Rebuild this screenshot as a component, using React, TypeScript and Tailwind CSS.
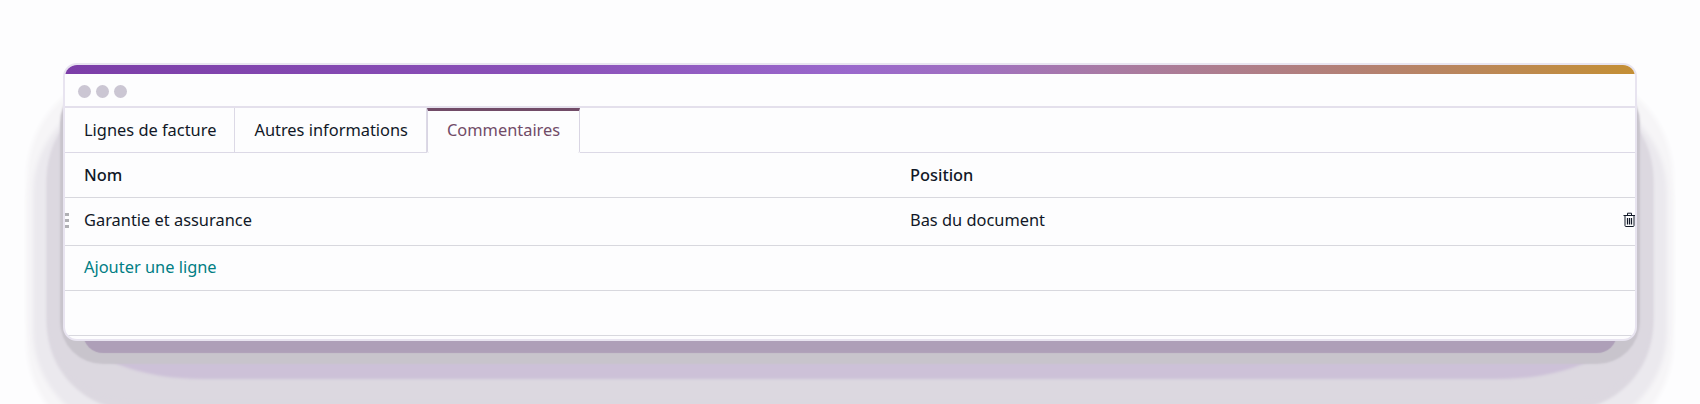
const Tab = ({ label, active = false }: { label: string; active?: boolean }) =>
  active ? (
    <div className="flex h-[45px] items-center rounded-b-[2px] border-x border-t-[3px] border-x-[#d9d5e3] border-t-[#714b67] bg-[#fdfdfe] px-[19px] pb-[3px] text-[#714b67]">
      {label}
    </div>
  ) : (
    <div className="flex h-[45px] items-center border-b border-r border-[#dcd9e6] pl-[19px] pr-[18px] text-[#111827]">
      {label}
    </div>
  );

const Row = ({ left, right, className }: { left: string; right: string; className: string }) => (
  <div className={`grid grid-cols-[826px_1fr] items-center border-b border-[#d8d8de] pl-[19px] text-[#111827] ${className}`}>
    <span>{left}</span>
    <span>{right}</span>
  </div>
);

const TrashIcon = () => (
  <svg viewBox="0 0 13 15" className="h-[15px] w-[13px] text-[#111827]" fill="none" stroke="currentColor">
    <path d="M4.5 3V1.2h4V3" />
    <path d="M0.5 3.5h12" />
    <path d="M2 3.5v10.2c0 .5.3.8.8.8h7.4c.5 0 .8-.3.8-.8V3.5" />
    <path d="M4.5 6v6.5M6.5 6v6.5M8.5 6v6.5" strokeWidth="1.2" />
  </svg>
);

export default function App() {
  return (
    <div className="h-[404px] overflow-hidden bg-[#fdfdfe] px-[63px] pt-[63px] font-['Noto_Sans',sans-serif] text-[16.4px]">
      {/* wide stepped shadow, big corner radius so the steps curve */}
      <div className="rounded-[70px] shadow-[0_44px_3px_16px_#dcd8e0,0_53px_3px_16px_#dcd8e0,0_60px_4px_30px_#ebe9ee,0_72px_4px_36px_#f6f5f7,0_44px_4px_36px_#f6f5f7]">
        <div className="rounded-[140px/70px] shadow-[0_58px_3px_-20px_#cdc1d8]">
          {/* tight shadow under the card */}
          <div className="rounded-[40px] shadow-[0_32px_1px_-20px_#ae9fb8,0_20px_2px_3px_#c8c4cc]">
            <div className="flex h-[278px] flex-col overflow-hidden rounded-[14px] border-2 border-[#e8e4f0] bg-[#fdfdfe]">
              <div className="h-[9px] shrink-0 bg-[linear-gradient(90deg,#7c3ea8_0%,#8a50b8_30%,#9a68cc_50%,#a070c0_58%,#a87aa5_66%,#b38075_82%,#c48f35_100%)]" />
              <div className="flex h-[34px] shrink-0 items-center gap-[5px] border-b-2 border-[#e4e0ec] pl-[13px] pt-[2px]">
                <span className="size-[13px] rounded-full bg-[#cbc6d3]" />
                <span className="size-[13px] rounded-full bg-[#cbc6d3]" />
                <span className="size-[13px] rounded-full bg-[#cbc6d3]" />
              </div>
              <div className="flex shrink-0">
                <Tab label="Lignes de facture" />
                <Tab label="Autres informations" />
                <Tab label="Commentaires" active />
                <div className="h-[45px] flex-1 border-b border-[#dcd9e6]" />
              </div>
              <Row left="Nom" right="Position" className="h-[45px] font-medium" />
              <div className="relative">
                <Row left="Garantie et assurance" right="Bas du document" className="h-[48px] pb-[3px]" />
                <div className="absolute left-0 top-[15px] flex flex-col gap-[3px]">
                  <span className="h-[3px] w-[4px] bg-[#b0b0b4]" />
                  <span className="h-[3px] w-[4px] bg-[#b0b0b4]" />
                  <span className="h-[3px] w-[4px] bg-[#b0b0b4]" />
                </div>
                <div className="absolute right-[-1px] top-[14px]">
                  <TrashIcon />
                </div>
              </div>
              <div className="flex h-[45px] shrink-0 items-center border-b border-[#d8d8de] pb-px pl-[19px] text-[#017e84]">
                Ajouter une ligne
              </div>
              <div className="h-[45px] shrink-0 border-b border-[#d8d8de]" />
            </div>
          </div>
        </div>
      </div>
    </div>
  );
}
